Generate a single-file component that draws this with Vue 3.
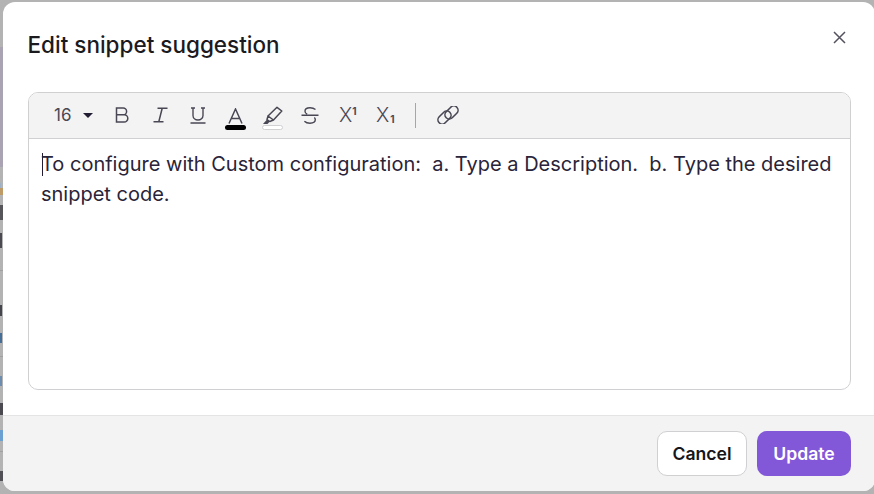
<script setup>
const text = 'To configure with Custom configuration:  a. Type a Description.  b. Type the desired snippet code.'
// Slivers of the page behind the dialog: [height, colour, width]
const slivers = [
  [47, 'transparent', 3], [120, '#a9a3b3', 3], [16, 'transparent', 3],
  [5, '#9db0c4', 1], [7, '#bd9a66', 3], [10, 'transparent', 3],
  [15, '#55555a', 3], [13, 'transparent', 3], [15, '#4a4a50', 2], [22, 'transparent', 3],
  [1, '#a0a0a0', 3], [34, 'transparent', 3], [11, '#45454e', 2], [17, 'transparent', 3],
  [10, '#456f99', 2], [13, 'transparent', 3], [1, '#a0a0a0', 3], [19, 'transparent', 3],
  [10, '#6c8db0', 2], [17, 'transparent', 3], [12, '#4a4a50', 3], [15, 'transparent', 3],
  [11, '#6aa0d2', 3], [10, 'transparent', 3], [1, '#a0a0a0', 3], [19, 'transparent', 3],
  [10, '#505056', 3]
]
</script>

<template>
  <div class="screen">
    <div class="backdrop">
      <i
        v-for="(s, n) in slivers"
        :key="n"
        class="sliver"
        :style="{ height: s[0] + 'px', background: s[1], width: s[2] + 'px' }"
      ></i>
    </div>
    <div class="modal">
      <header class="head">
        <h1>Edit snippet suggestion</h1>
        <svg class="close" width="13" height="13" viewBox="0 0 13 13"><path d="M1 1l11 11M12 1L1 12" stroke="#55525f" stroke-width="1.5" fill="none"/></svg>
      </header>
      <div class="body">
        <div class="editor">
          <div class="toolbar">
            <span class="size">16</span>
            <svg class="caret" width="10" height="5" viewBox="0 0 10 5"><path d="M0 0h10L5 5z" fill="#221d33"/></svg>
            <span class="slot">
              <svg width="15" height="16" viewBox="0 0 15 16"><path d="M1.500 1h6.700a3.400 3.400 0 0 1 0 6.800H1.500zM1.500 7.800h7.700a3.600 3.600 0 0 1 0 7.200H1.500zM1.500 1v14" fill="none" stroke="#4a4754" stroke-width="1.500"/></svg>
            </span>
            <span class="slot">
              <svg width="15" height="16" viewBox="0 0 15 16"><path d="M4.500 1.200h10M0.500 14.800h10M9.200 1.200L5.800 14.800" fill="none" stroke="#4a4754" stroke-width="1.500"/></svg>
            </span>
            <span class="slot">
              <svg width="16" height="17" viewBox="0 0 16 17"><path d="M3 1v7.500a5 4.500 0 0 0 10 0V1M1 1h4M11 1h4M0.500 16h15" fill="none" stroke="#4a4754" stroke-width="1.400"/></svg>
            </span>
            <span class="slot stack">
              <svg width="15" height="16" viewBox="0 0 15 16"><path d="M1 15.500L7.500 1 14 15.500M3.500 10.500h8" fill="none" stroke="#4a4754" stroke-width="1.500"/></svg>
              <i class="bar black"></i>
            </span>
            <span class="slot stack hl">
              <svg width="21" height="19" viewBox="0 0 21 19"><path d="M15 1.300l4.800 3.700L11.500 14 6 10zM6 10l-1 3.500 2.800 2 3.700-1.500" fill="none" stroke="#4a4754" stroke-width="1.500" stroke-linejoin="round"/><path d="M5 13.500l2.800 2-2.300 2.500H1z" fill="#4a4754"/></svg>
              <i class="bar white"></i>
            </span>
            <span class="slot">
              <svg width="18" height="17" viewBox="0 0 18 17"><path d="M14.500 2.500C13 1.300 11 .8 9 .8 6.200.8 4 2 4 4.200c0 1.300.8 2.400 2.200 3M.5 8.300h17M13.300 10.500c.6.600 1 1.300 1 2.100 0 2.200-2.400 3.600-5.300 3.600-2.200 0-4.200-.6-5.600-2" fill="none" stroke="#4a4754" stroke-width="1.400"/></svg>
            </span>
            <span class="slot script">X<sup>1</sup></span>
            <span class="slot script">X<sub>1</sub></span>
            <i class="divider"></i>
            <span class="slot">
              <svg width="22" height="18" viewBox="0 0 22 18"><g fill="none" stroke="#4a4754" stroke-width="1.600"><rect x="0" y="7.250" width="15" height="8.500" rx="4.250" transform="rotate(-45 7.500 11.500)"/><rect x="7" y="2.250" width="15" height="8.500" rx="4.250" transform="rotate(-45 14.500 6.500)"/></g></svg>
            </span>
          </div>
          <div class="content"><span class="cursor"></span>{{ text }}</div>
        </div>
      </div>
      <footer class="foot">
        <button class="btn cancel">Cancel</button>
        <button class="btn update">Update</button>
      </footer>
    </div>
  </div>
</template>

<style scoped>
.screen { position: relative; width: 874px; height: 494px; overflow: hidden; background: #b3b3b3; font-family: Inter, sans-serif; }
.backdrop { position: absolute; left: 0; top: 0; width: 3px; height: 494px; overflow: hidden; display: flex; flex-direction: column; }
.sliver { display: block; flex: none; }
.modal { position: absolute; left: 3px; top: 2px; width: 872px; height: 489px; background: #fff; border-radius: 12px; display: flex; flex-direction: column; overflow: hidden; }
.head { height: 90px; flex: none; display: flex; justify-content: space-between; align-items: flex-start; padding: 0 29px 0 24.5px; }
h1 { margin: 28.400px 0 0; font-size: 22.5px; font-weight: 500; line-height: 30px; color: #1b1b1f; }
.close { margin-top: 29px; }
.body { flex: 1; padding: 0 24px 25px 25px; display: flex; }
.editor { flex: 1; border: 1px solid #d0d0d3; border-radius: 10px; overflow: hidden; display: flex; flex-direction: column; }
.toolbar { height: 46px; flex: none; background: #f3f3f3; border-bottom: 1px solid #d0d0d3; display: flex; align-items: center; padding-left: 25px; padding-bottom: 1px; box-sizing: border-box; color: #4a4754; }
.size { font-size: 17px; color: #4a4754; width: 29px; }
.caret { margin-right: 11px; }
.slot { width: 37.5px; flex: none; display: flex; justify-content: center; align-items: center; }
.stack { flex-direction: column; margin-top: 7px; }
.hl { margin-top: 6px; }
.bar { display: block; width: 21px; height: 5px; border-radius: 3px; box-sizing: border-box; }
.black { background: #000; margin-top: 1px; }
.white { background: #fff; border: 1px solid #d0d0d3; }
.script { font-size: 20px; font-weight: 300; color: #4a4754; line-height: 1; }
.script sup, .script sub { font-size: 10px; font-weight: 700; line-height: 1; }
.script sup { align-self: flex-start; margin-top: 1px; }
.script sub { align-self: flex-end; margin-bottom: 1px; margin-left: 1px; }
.divider { width: 1px; height: 25px; background: #a5a5ab; margin-left: 10.500px; margin-right: 13.500px; flex: none; }
.content { flex: 1; position: relative; padding: 10px 12px; font-size: 20px; line-height: 30px; color: #2a2438; white-space: pre-wrap; }
.cursor { position: absolute; left: 13px; top: 14px; width: 1px; height: 23px; background: #221d33; }
.foot { height: 76px; flex: none; background: #f3f3f3; border-top: 1px solid #e4e4e4; display: flex; justify-content: flex-end; align-items: center; gap: 10px; padding-right: 24px; box-sizing: border-box; }
.btn { height: 45px; border-radius: 10px; font-family: Inter, sans-serif; font-size: 17.6px; font-weight: 600; }
.cancel { width: 90px; background: #fff; border: 1px solid #d0d0d3; color: #16161a; }
.update { width: 94px; background: #8257d8; border: 0; color: #fff; }
</style>
